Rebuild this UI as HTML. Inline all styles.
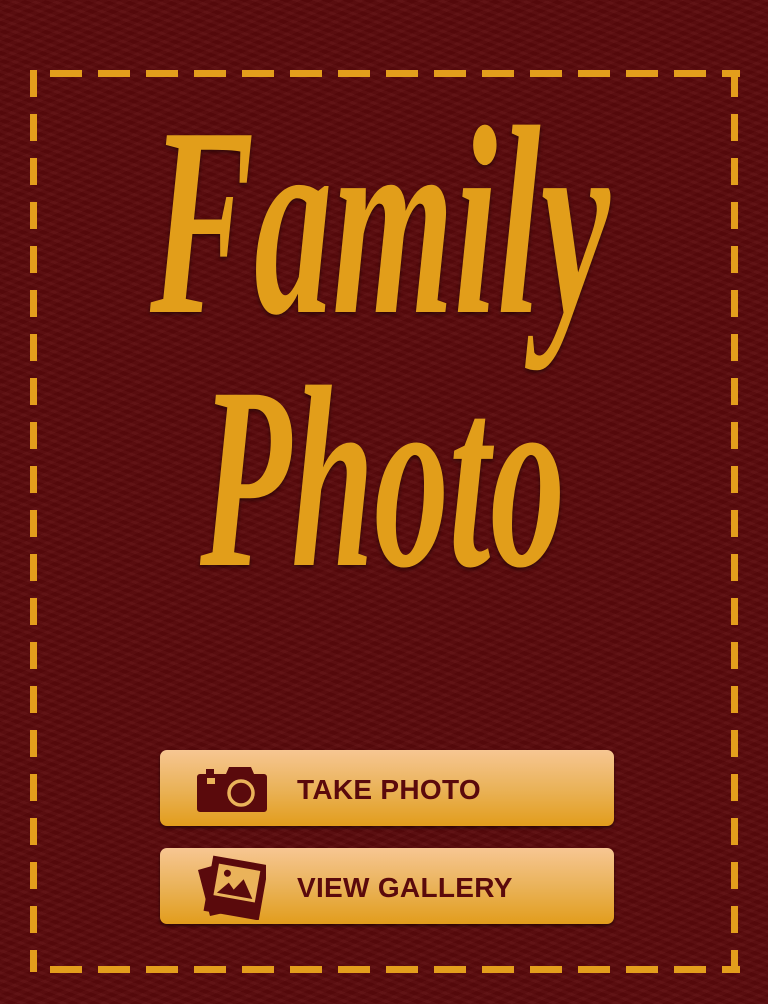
<!DOCTYPE html>
<html><head><meta charset="utf-8"><style>
html,body{margin:0;padding:0}
body{width:768px;height:1004px;overflow:hidden;position:relative;background:#5a090b;
background-image:repeating-linear-gradient(20deg,rgba(255,255,255,0.025) 0 3px,rgba(0,0,0,0.04) 3px 7px),repeating-linear-gradient(-25deg,rgba(255,255,255,0.02) 0 4px,rgba(0,0,0,0.03) 4px 9px);font-family:"Liberation Sans",sans-serif}
.btn{position:absolute;left:160px;width:454px;height:76px;border-radius:7px;background:linear-gradient(#f7c692,#eab35a 50%,#e29d1c);box-shadow:0 2px 3px rgba(0,0,0,.5)}
.btn span{position:absolute;left:137px;top:0;line-height:80px;font-weight:bold;font-size:28px;color:#5a0a0c;letter-spacing:0.3px}
.btn svg{position:absolute}
</style></head><body>
<svg width="768" height="1004" style="position:absolute;left:0;top:0">
<g fill="none" stroke="#e39e1c" stroke-width="7">
<line x1="50" y1="73.5" x2="740" y2="73.5" stroke-dasharray="32 16"/>
<line x1="50" y1="969.5" x2="740" y2="969.5" stroke-dasharray="32 16"/>
<line x1="33.5" y1="70" x2="33.5" y2="972" stroke-dasharray="27 17"/>
<line x1="734.5" y1="70" x2="734.5" y2="972" stroke-dasharray="27 17"/>
</g>
<g fill="#e29e1a" font-family="Liberation Serif,serif" font-style="italic" font-weight="bold" style="filter:drop-shadow(0 2px 2px rgba(0,0,0,.5))">
<text x="150" y="312" font-size="270" textLength="460" lengthAdjust="spacingAndGlyphs">Family</text>
<text x="200" y="565" font-size="260" textLength="365" lengthAdjust="spacingAndGlyphs">Photo</text>
</g>
</svg>
<div class="btn" style="top:750px">
<svg style="left:36px;top:14px" width="72" height="50" viewBox="0 0 72 50"><path fill="#5a0a0c" d="M4 10h6V5h8v5h12l3-7h22l3 7h10a3 3 0 0 1 3 3v32a3 3 0 0 1-3 3H4a3 3 0 0 1-3-3V13a3 3 0 0 1 3-3z"/><rect x="11" y="14" width="8" height="6" fill="#eab35a"/><circle cx="45" cy="29" r="12" fill="none" stroke="#eab35a" stroke-width="3.5"/></svg>
<span>TAKE PHOTO</span></div>
<div class="btn" style="top:848px">
<svg style="left:38px;top:6px" width="68" height="66" viewBox="0 0 68 66"><g fill="#5a0a0c"><path d="M0 16l28-8 2 50-18 4z"/><g transform="rotate(10 38 34)"><rect x="10" y="6" width="56" height="56"/><rect x="17" y="13" width="42" height="32" fill="#eab35a"/><path d="M20 42l10-12 6 6 8-12 12 18z"/><circle cx="27" cy="21" r="3.5"/></g></g></svg>
<span>VIEW GALLERY</span></div>
</body></html>
